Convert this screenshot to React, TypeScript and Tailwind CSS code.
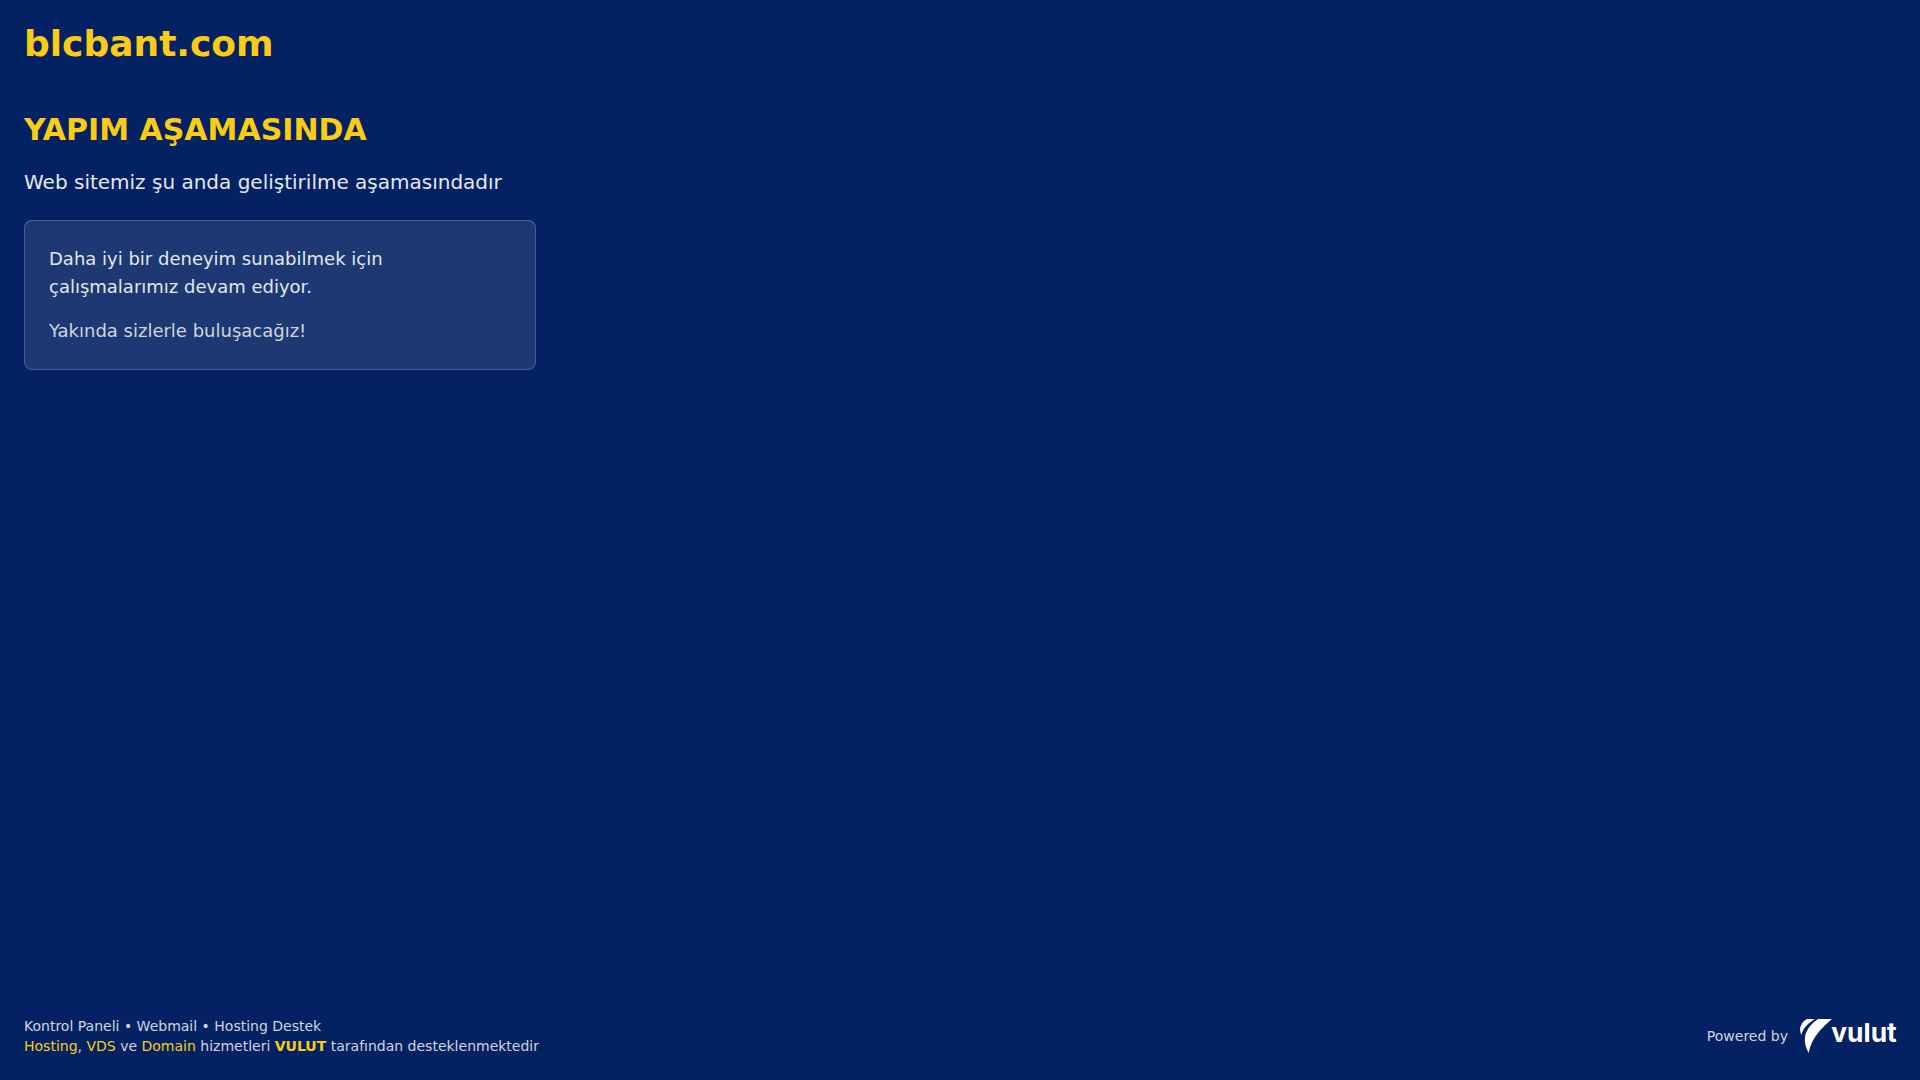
function VulutLogo() {
  return (
    <svg
      viewBox="0 0 288 102"
      className="h-[34px] w-24 overflow-visible"
      fill="#ffffff"
      role="img"
      aria-label="vulut"
    >
      <path d="M21 0H44C24 13 8 29 4 48C-1 37-1 26 4 17C8 9 14 3 21 0Z" />
      <path d="M54 0H96C68 24 35 54 26 102C17 86 13 70 15 54C18 32 35 13 54 0Z" />
      <text
        x="94"
        y="69"
        fontSize="79"
        className="font-['Inter',sans-serif] font-bold"
      >
        vulut
      </text>
    </svg>
  );
}

const linkClass = "text-[#facc15] hover:underline";

export default function App() {
  return (
    <div className="flex min-h-screen flex-col bg-[#042263] p-6 font-['DejaVu_Sans',sans-serif] text-[#d1d5db]">
      <header className="mb-12">
        <h1 className="text-4xl font-bold text-[#facc15]">blcbant.com</h1>
      </header>

      <main className="flex-1">
        <h2 className="mb-5 text-3xl font-bold text-[#facc15]">
          YAPIM AŞAMASINDA
        </h2>
        <p className="mb-6 text-xl text-[#e5e7eb]">
          Web sitemiz şu anda geliştirilme aşamasındadır
        </p>

        <div className="max-w-lg rounded-lg border border-white/20 bg-white/10 p-6 text-lg">
          <p className="mb-4 text-[#e5e7eb]">
            Daha iyi bir deneyim sunabilmek için çalışmalarımız devam ediyor.
          </p>
          <p>Yakında sizlerle buluşacağız!</p>
        </div>
      </main>

      <footer className="flex items-center justify-between text-sm">
        <div>
          <p>
            <a href="#panel" className="hover:underline">Kontrol Paneli</a> •{" "}
            <a href="#webmail" className="hover:underline">Webmail</a> •{" "}
            <a href="#destek" className="hover:underline">Hosting Destek</a>
          </p>
          <p>
            <a href="#hosting" className={linkClass}>Hosting</a>,{" "}
            <a href="#vds" className={linkClass}>VDS</a> ve{" "}
            <a href="#domain" className={linkClass}>Domain</a> hizmetleri{" "}
            <a href="#vulut" className="font-bold text-[#facc15] hover:underline">VULUT</a>{" "}
            tarafından desteklenmektedir
          </p>
        </div>

        <div className="flex items-center gap-3">
          <span>Powered by</span>
          <a href="#vulut">
            <VulutLogo />
          </a>
        </div>
      </footer>
    </div>
  );
}
